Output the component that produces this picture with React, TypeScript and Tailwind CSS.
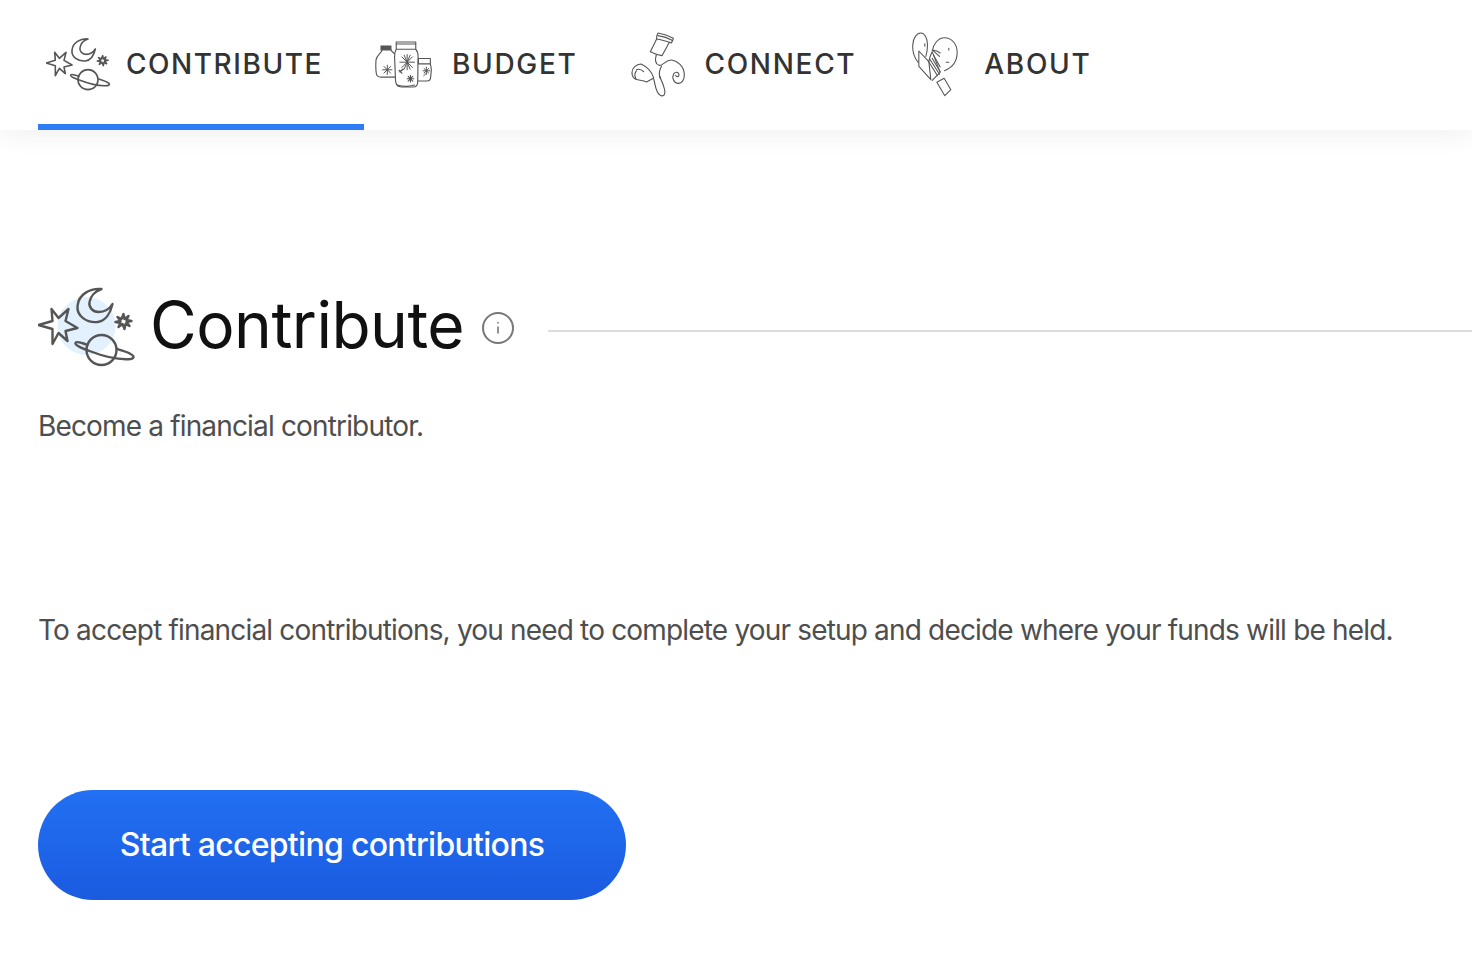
const INK = "#555";

// moon, star and planet, traced from the heading icon
function SpaceIcon({ className, blob, sw }: { className: string; blob?: boolean; sw: number }) {
  return (
    <svg viewBox="8 10 96 81" fill="none" stroke={INK} strokeWidth={sw} strokeLinecap="round" strokeLinejoin="round" className={className}>
      {blob && <circle cx="56" cy="50" r="29" fill="#e3f0fd" stroke="none" />}
      <path d="M71 13C60 12 48 18 47 30c-1 10 9 17 20 16 8-1 13-9 15-18-3 5-8 8-14 8-6 0-10-5-9-10 1-6 6-11 12-13z" />
      <path d="M8 49L22 45 21 33 28 42 38 33 35 45 47 52 35 55 37 65 28 57 22 68 22 53z" />
      <path d="M93 38l1 5 4-3-2 4 5 1-5 1 3 4-4-2-1 5-2-5-4 3 2-4-5-1 5-1-3-4 4 2z" />
      <circle cx="71" cy="74" r="15" />
      <path d="M57 69c-5-2-11-4-12-2-1 2 6 5 14 8 13 5 30 9 41 8 4-1 4-3 0-5-3-2-8-3-13-5" />
    </svg>
  );
}

function JarsIcon({ className }: { className: string }) {
  return (
    <svg viewBox="45 58 175 145" fill="none" stroke={INK} strokeWidth="3.4" strokeLinecap="round" strokeLinejoin="round" className={className}>
      <path d="M63 76h30v12H63z" fill={INK} />
      <path d="M66 88c0 8-16 16-18 30-1 14-1 30 1 42 1 7 6 10 14 10h42" />
      <path d="M93 88c2 5 7 8 12 12" />
      <path d="M109 64h59v22h-59zM110 70h57M109 86c-3 5-5 12-5 22l3 74c1 11 8 18 18 18h35c9 0 14-6 14-17l1-75c0-10-2-17-7-22" />
      <path d="M112 194c16 5 36 5 52 0" />
      <path d="M176 114h36v16h-36zM176 130h36c2 6 3 12 3 20l-2 20c0 8-4 12-11 12h-26" />
      <path d="M142 102v46M120 125h44M126 109l32 32M158 109l-32 32M133 104l18 42M151 104l-18 42" strokeWidth="3" />
      <path d="M82 134v28M68 148h28M72 138l20 20M92 138l-20 20" strokeWidth="3" />
      <path d="M152 165v20M142 175h20M145 168l14 14M159 168l-14 14" strokeWidth="3.4" />
      <path d="M120 154l10-8M118 150l8 8" strokeWidth="4" />
      <path d="M200 140v22M190 151h20M193 144l14 14M207 144l-14 14M192 166l6-6" strokeWidth="3" />
    </svg>
  );
}

function CupsIcon({ className }: { className: string }) {
  return (
    <svg viewBox="812 35 165 195" fill="none" stroke={INK} strokeWidth="3.4" strokeLinecap="round" strokeLinejoin="round" className={className}>
      <path d="M893 38c14 2 32 8 46 16-1 5-3 9-6 14-14-5-30-10-44-12-1-6 1-13 4-18z" />
      <path d="M889 56l-19 38c10 5 23 10 35 12l22-40M893 46c14 2 30 7 42 14" />
      <path d="M888 103c-4 14-4 28 8 32 12 3 20-18 38-16 18 3 36 18 38 42 1 18-8 30-20 28-12-2-18-18-12-28 5-8 16-6 16 2 0 7-8 8-10 2" />
      <path d="M904 137c-6 10-9 24-5 36" />
      <path d="M842 131c-14 1-27 12-27 26 0 10 5 17 12 20 9 3 22 3 32 8l21-12c-4-14-16-32-38-42z" />
      <path d="M828 152c-6 6-6 18 0 25M828 148c8-3 16 0 22 6" />
      <path d="M880 176c4 12 4 24 10 36 4 9 11 16 18 14 8-3 6-16 2-28-3-12-10-22-11-30" />
    </svg>
  );
}

function BookIcon({ className }: { className: string }) {
  return (
    <svg viewBox="70 35 140 195" fill="none" stroke={INK} strokeWidth="3.2" strokeLinecap="round" strokeLinejoin="round" className={className}>
      <path d="M88 126C76 112 70 94 72 72c2-20 12-34 24-34 12 0 20 16 20 36 0 12-2 24-5 34" />
      <path d="M131 90c3-18 16-38 36-38 22 0 38 20 38 44 0 26-14 46-38 55" />
      <path d="M108 70v8M180 84v5M172 126h8M130 90c10-1 18 3 24 8" />
      <path d="M90 92l30 32 6 54-36-40z" />
      <path d="M120 124c2-12 6-22 10-30l24 62-24 24" />
      <path d="M118 122l28 44M124 118l28 44M130 114l24 40M134 104l20 36M132 90l20 18" />
      <path d="M144 186l22-12 20 34-18 18z" />
    </svg>
  );
}

function NavTab({ icon, label, className, textClassName }: { icon: React.ReactNode; label: string; className: string; textClassName: string }) {
  return (
    <a className={"flex items-center " + className}>
      {icon}
      <span className={"text-[28px] font-medium leading-none tracking-[0.06em] text-[#333] " + textClassName}>{label}</span>
    </a>
  );
}

export default function App() {
  return (
    <div className="min-h-[958px] overflow-hidden bg-white font-['Inter',sans-serif]">
      <nav className="flex h-[130px] bg-white pl-[38px] shadow-[0_6px_24px_rgba(0,0,0,0.06)]">
        <a className="flex h-[130px] w-[326px] items-center border-b-[6px] border-[#2e7cf6] pl-[8px] pt-[4px]">
          <SpaceIcon sw={2.4} className="mr-[16px] h-[54px] w-[64px]" />
          <span className="text-[28px] font-medium leading-none tracking-[0.055em] text-[#333]">CONTRIBUTE</span>
        </a>
        <NavTab className="ml-[11px] pb-[2px]" textClassName="ml-[19px]" icon={<JarsIcon className="h-[48px] w-[58px]" />} label="BUDGET" />
        <NavTab className="ml-[53px] pb-[2px]" textClassName="ml-[19px]" icon={<CupsIcon className="h-[65px] w-[55px]" />} label="CONNECT" />
        <NavTab className="ml-[56px] pb-[2px]" textClassName="ml-[25px]" icon={<BookIcon className="h-[65px] w-[47px]" />} label="ABOUT" />
      </nav>

      <main className="pl-[38px]">
        <div className="mt-[154px] flex h-[84px] items-center">
          <SpaceIcon blob sw={2.4} className="h-[81px] w-[97px]" />
          <h1 className="mb-[2px] ml-[15px] w-[313px] whitespace-nowrap text-[64px] font-normal leading-none tracking-[-0.008em] text-[#111]">Contribute</h1>
          <svg viewBox="0 0 32 32" fill="none" stroke="#777" className="ml-[19px] mt-[4px] h-[32px] w-[32px] shrink-0">
            <circle cx="16" cy="16" r="15" strokeWidth="2" />
            <path d="M16 14.5v7M16 10v1.5" strokeWidth="1.6" />
          </svg>
          <div className="ml-[34px] mt-[9px] h-[2px] flex-1 bg-[#dcdcdc]" />
        </div>

        <p className="mt-[40px] text-[28px] leading-[36px] tracking-[-0.03em] text-[#4e4e4e]">Become a financial contributor.</p>
        <p className="mt-[168px] whitespace-nowrap text-[28px] leading-[36px] tracking-[-0.0295em] text-[#4e4e4e]">
          To accept financial contributions, you need to complete your setup and decide where your funds will be held.
        </p>

        <button className="mt-[142px] flex h-[110px] w-[588px] items-center justify-center rounded-[55px] bg-gradient-to-b from-[#2270f3] to-[#1b5be0] text-[32px] font-medium tracking-[-0.022em] text-white">
          Start accepting contributions
        </button>
      </main>
    </div>
  );
}
